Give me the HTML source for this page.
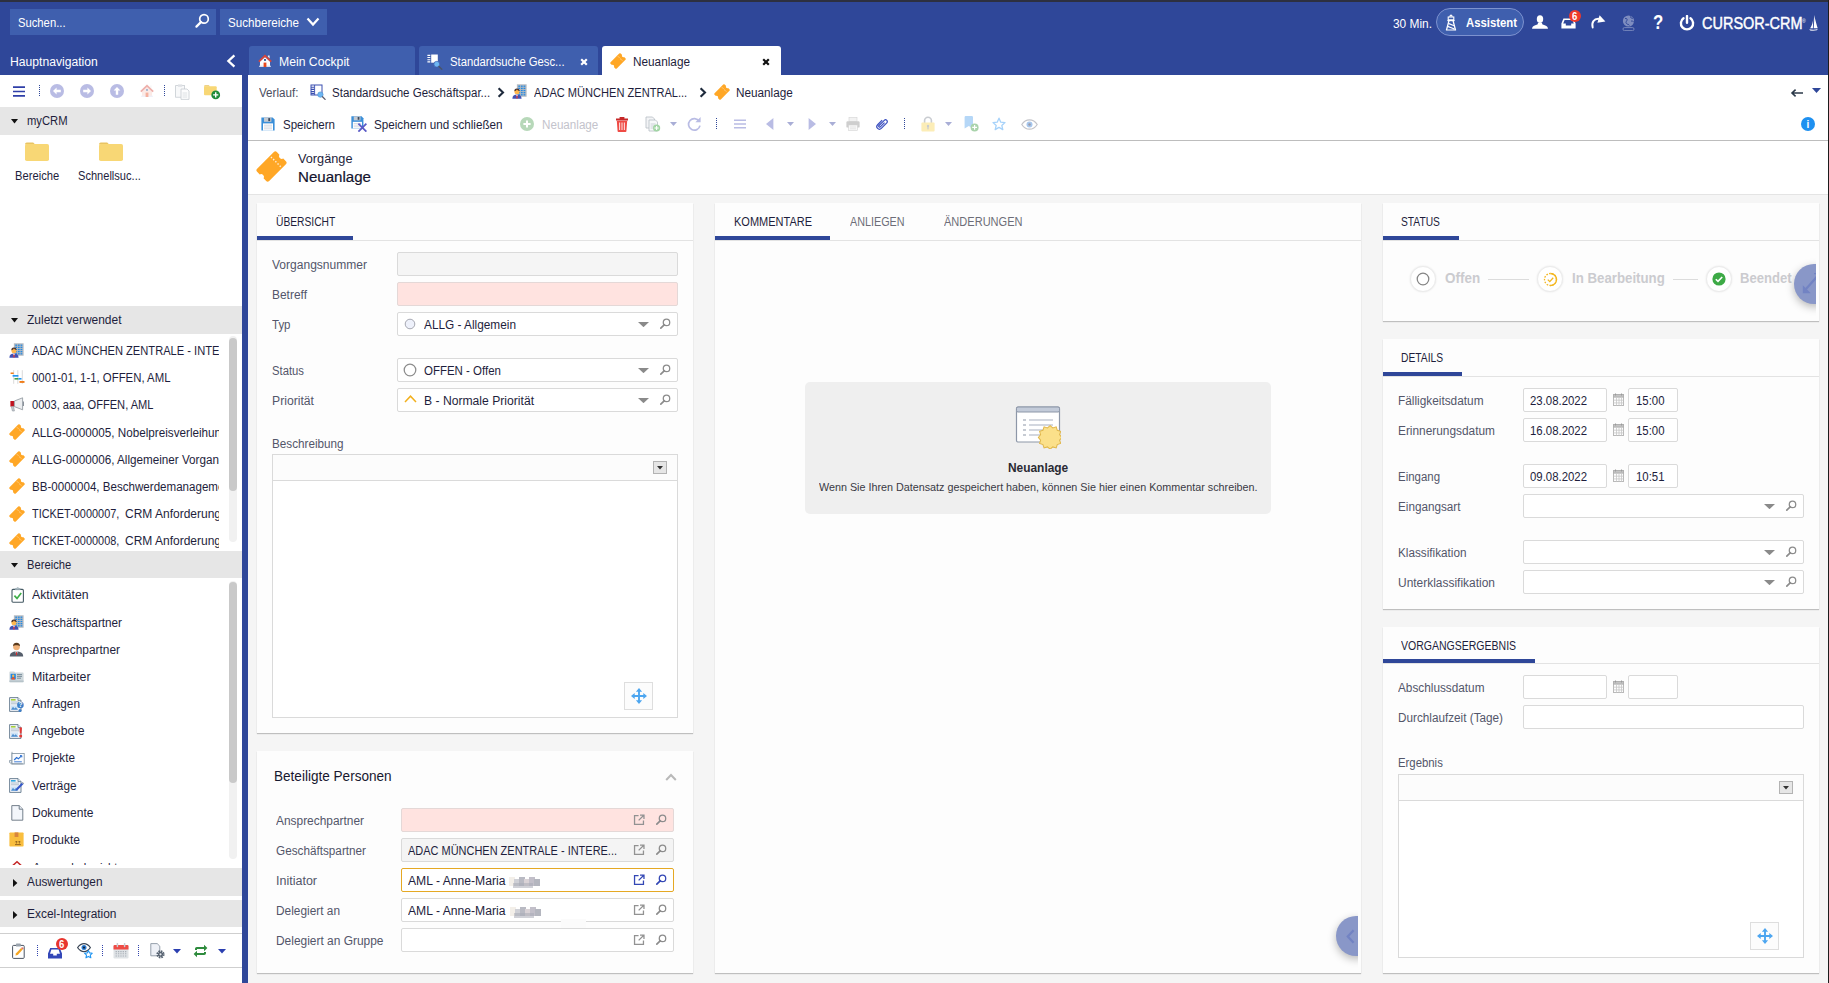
<!DOCTYPE html>
<html lang="de"><head><meta charset="utf-8"><title>CURSOR-CRM</title>
<style>
html,body{margin:0;padding:0;}
body{width:1829px;height:983px;overflow:hidden;position:relative;background:#f5f5f5;font-family:"Liberation Sans",sans-serif;color:#1e1e3c;}
.a{position:absolute;box-sizing:border-box;}
.t{position:absolute;white-space:nowrap;line-height:1;transform-origin:0 0;}
.f{background:#fff;border:1px solid #d6d6d6;border-radius:2px;}
.p{background:#fdfdfd;box-shadow:0 1px 1px rgba(0,0,0,.22);}
</style></head>
<body>
<div class="a " style="left:0px;top:0px;width:1829px;height:75px;background:#2f4799;"></div>
<div class="a " style="left:0px;top:0px;width:1829px;height:2px;background:#2d3040;"></div>
<div class="a " style="left:10px;top:9px;width:206px;height:26px;background:#3f5fae;"></div>
<span class="t" style="left:18.00px;top:17px;font-size:12.5px;transform:scaleX(0.8994);color:#fff;">Suchen...</span>
<svg class="a" style="left:194px;top:13px;" width="16" height="16" viewBox="0 0 16 16"><circle cx="10" cy="5.900" r="4.300" fill="none" stroke="#fff" stroke-width="1.7"/><path d="M6.900 9.100L2.400 13.600" stroke="#fff" stroke-width="2.2" stroke-linecap="round"/></svg>
<div class="a " style="left:220px;top:9px;width:107px;height:26px;background:#3f5fae;"></div>
<span class="t" style="left:227.50px;top:17px;font-size:12.5px;transform:scaleX(0.9288);color:#fff;">Suchbereiche</span>
<svg class="a" style="left:306px;top:17px;" width="14" height="10" viewBox="0 0 14 10"><path d="M1.5 1.5L7 7.5l5.5-6" fill="none" stroke="#fff" stroke-width="2.2"/></svg>
<span class="t" style="left:1392.60px;top:18px;font-size:12.5px;transform:scaleX(0.9514);color:#fff;">30 Min.</span>
<div class="a " style="left:1436px;top:8px;width:88px;height:28px;background:#3f5fae;border:1px solid #7d92cf;border-radius:14px;"></div>
<svg class="a" style="left:1445px;top:13.5px;" width="12" height="17" viewBox="0 0 12 17"><path d="M6 .300L3.700 2.600h4.600z" fill="#fff"/><rect x="3.200" y="3" width="5.600" height="2.800" fill="none" stroke="#fff" stroke-width="1.100"/><path d="M2.400 6.600h7.200" stroke="#fff" stroke-width="1.200"/><path d="M3.900 6.800L1.500 16M8.100 6.800L10.500 16" fill="none" stroke="#fff" stroke-width="1.300"/><path d="M3.300 9.400l5.900 2.400M2.600 12.400l6.900 2.600M.900 16h10.200" stroke="#fff" stroke-width="1.200"/></svg>
<span class="t" style="left:1465.50px;top:17px;font-size:12.5px;transform:scaleX(0.9046);color:#fff;font-weight:bold;">Assistent</span>
<svg class="a" style="left:1532px;top:15px;" width="16" height="14" viewBox="0 0 16 14"><ellipse cx="8" cy="4.100" rx="3.200" ry="3.900" fill="#fff"/><path d="M0 13.800c.200-2.600 2.400-3.300 5.300-4.200.500-.200.600-.900.600-1.600h4.200c0 .700.100 1.400.600 1.600 2.900.900 5.100 1.600 5.300 4.200z" fill="#fff"/></svg>
<svg class="a" style="left:1560.5px;top:18px;" width="15" height="11" viewBox="0 0 15 11"><path d="M.400 10.600V5.400L2.400.400h10.200l2 5v5.200zM2.200 5.600h2.600v2h5.400v-2h2.600l-1.400-3.600H3.600z" fill="#fff" fill-rule="evenodd"/></svg>
<div class="a " style="left:1569px;top:10px;width:12px;height:12px;background:#ee3a2c;border-radius:6px;"></div>
<span class="t" style="left:1572.30px;top:12px;font-size:10px;transform:scaleX(0.9500);color:#fff;font-weight:bold;">6</span>
<svg class="a" style="left:1590px;top:14px;" width="16" height="15" viewBox="0 0 16 15"><path d="M2.700 13.600C1.300 8.600 3.800 4.200 9.400 4.900" fill="none" stroke="#fff" stroke-width="1.900" stroke-linecap="round"/><path d="M9.600 1.200l5.800 6.400-8 1.200z" fill="#fff"/></svg>
<svg class="a" style="left:1622px;top:15px;" width="13" height="16" viewBox="0 0 13 16"><g opacity=".38"><circle cx="6.5" cy="6" r="5.6" fill="#fff"/><path d="M3 3.5c1.5-.5 2.5.5 2 1.8S3.4 7 4.4 8.4s2.4.6 3 2M8.6 1.4c-.6 1.4 1 2 2.4 1.8M9 6.2c1-.4 2.2 0 2.8.8" stroke="#2f4799" fill="none" stroke-width="1"/><rect x="1" y="12.6" width="11" height="3" rx="1.4" fill="none" stroke="#fff" stroke-width=".9"/></g></svg>
<span class="t" style="left:1653.30px;top:11px;font-size:21px;transform:scaleX(0.8000);color:#fff;font-weight:bold;">?</span>
<svg class="a" style="left:1679px;top:14.5px;" width="16" height="16" viewBox="0 0 16 16"><path d="M4.500 3.300a6.100 6.100 0 1 0 7 0" fill="none" stroke="#fff" stroke-width="2.400" stroke-linecap="round"/><path d="M8 1v6.800" stroke="#fff" stroke-width="2.400" stroke-linecap="round"/></svg>
<span class="t" style="left:1702.00px;top:15px;font-size:16.5px;transform:scaleX(0.8780);color:#fff;-webkit-text-stroke:.45px #fff;">CURSOR-CRM</span>
<span class="t" style="left:1802.00px;top:19px;font-size:5px;color:#fff;">®</span>
<svg class="a" style="left:1808.5px;top:15px;" width="9" height="16" viewBox="0 0 9 16"><path d="M5.200 0C6.300 5 7.500 9.600 8.700 13.200H4.700C5.100 9 5.300 4.600 5.200 0zM4.300 2.800C4.100 7 3.100 10.600 1.200 13.200h2.700z" fill="#fff"/><path d="M.2 14.300c2.800.500 5.800.500 8.600-.200l-.9 1.200c-2.200.500-4.800.500-6.800.100z" fill="#fff" opacity=".9"/></svg>
<span class="t" style="left:10.40px;top:56px;font-size:12.5px;transform:scaleX(0.9718);color:#fff;">Hauptnavigation</span>
<svg class="a" style="left:226px;top:54px;" width="10" height="14" viewBox="0 0 10 14"><path d="M8.4 1.4L2.4 7l6 5.6" fill="none" stroke="#fff" stroke-width="2.3"/></svg>
<div class="a " style="left:249px;top:46px;width:166px;height:29px;background:#3f5fae;border-radius:3px 3px 0 0;"></div>
<svg class="a" style="left:258px;top:54px;" width="14" height="14" viewBox="0 0 14 14"><g opacity="1"><path d="M2 7.600L7 3l5 4.600V13H2z" fill="#fbfbfd"/><path d="M1.200 11.700h11.600V13H1.200z" fill="#d9dcf1"/><path d="M9.900 1.400h1.700v3l-1.700-1.600z" fill="#eee"/><path d="M7 .500L.2 7l1.200 1.300L7 3l5.600 5.300L13.800 7z" fill="#d8453a"/><rect x="5.600" y="8.600" width="2.800" height="4.400" fill="#e8481c"/><rect x="6.100" y="5" width="1.800" height="1.900" fill="#1d4b8f"/></g></svg>
<span class="t" style="left:279.00px;top:56px;font-size:12.5px;transform:scaleX(0.9758);color:#fff;">Mein Cockpit</span>
<div class="a " style="left:419px;top:46px;width:179px;height:29px;background:#3f5fae;border-radius:3px 3px 0 0;"></div>
<svg class="a" style="left:427px;top:53.5px;" width="16" height="16" viewBox="0 0 16 16"><path d="M.4 1.300h2.900M.4 3.500h2.900M.4 5.700h2.900M.4 7.900h2.900" stroke="#fff" stroke-width="1.150"/><rect x="4.200" y=".500" width="6.600" height="8.200" fill="#fff"/><circle cx="9.800" cy="10.200" r="2.900" fill="#6db6f2" stroke="#3f5fae" stroke-width=".7"/><path d="M12 12.500l2.800 2.800" stroke="#4a5566" stroke-width="1.300" stroke-linecap="round"/></svg>
<span class="t" style="left:450.00px;top:56px;font-size:12.5px;transform:scaleX(0.9005);color:#fff;">Standardsuche Gesc...</span>
<svg class="a" style="left:580px;top:58px;" width="8" height="8" viewBox="0 0 8 8"><path d="M1.200 1.200l5.600 5.600M6.800 1.200L1.200 6.800" stroke="#fff" stroke-width="2.200"/></svg>
<div class="a " style="left:602px;top:46px;width:179px;height:29px;background:#fff;border-radius:3px 3px 0 0;"></div>
<svg class="a" style="left:610px;top:53px;" width="16" height="16" viewBox="0 0 16 16"><g transform="rotate(-45 8 8)"><path fill="#ffa726" d="M1.9 3.6h12.2a1.1 1.1 0 0 1 1.1 1.1v1.9a1.45 1.45 0 0 0 0 2.8v1.9a1.1 1.1 0 0 1-1.1 1.1H1.900a1.100 1.100 0 0 1-1.100-1.100V9.400a1.450 1.450 0 0 0 0-2.800V4.700a1.100 1.100 0 0 1 1.100-1.100z"/><path d="M11.300 4.300v7.400" stroke="#fff" stroke-opacity=".8" stroke-width=".75" stroke-dasharray=".75 .85"/></g></svg>
<span class="t" style="left:632.70px;top:56px;font-size:12.5px;transform:scaleX(0.9426);color:#1e1e3c;">Neuanlage</span>
<svg class="a" style="left:762px;top:58px;" width="8" height="8" viewBox="0 0 8 8"><path d="M1.200 1.200l5.600 5.600M6.800 1.200L1.200 6.800" stroke="#111" stroke-width="2.200"/></svg>
<div class="a " style="left:248px;top:75px;width:1581px;height:119px;background:#fff;"></div>
<div class="a " style="left:248px;top:140px;width:1581px;height:1px;background:#bdbdbd;"></div>
<div class="a " style="left:248px;top:194px;width:1581px;height:1px;background:#e4e4e4;"></div>
<span class="t" style="left:259.00px;top:87px;font-size:12.5px;transform:scaleX(0.9295);color:#4a4d5e;">Verlauf:</span>
<svg class="a" style="left:310px;top:84px;" width="16" height="16" viewBox="0 0 16 16"><rect x="1" y="1" width="11" height="10" fill="#fff" stroke="#3b4fb0" stroke-width="1"/><path d="M1 3.200h3.400M1 5.400h3.400M1 7.600h3.400M1 9.600h3.400" stroke="#3b4fb0" stroke-width="1.100"/><path d="M4.600 1v10" stroke="#3b4fb0" stroke-width=".9"/><circle cx="10.400" cy="10.600" r="2.700" fill="#6db6f2" stroke="#4a8fd0" stroke-width=".6"/><path d="M12.500 12.800l2.600 2.600" stroke="#5a5a6a" stroke-width="1.300" stroke-linecap="round"/></svg>
<span class="t" style="left:331.50px;top:87px;font-size:12.5px;transform:scaleX(0.9217);color:#1e1e3c;">Standardsuche Geschäftspar...</span>
<svg class="a" style="left:497px;top:86.5px;" width="8" height="11" viewBox="0 0 8 11"><path d="M1.6 1.2L6 5.5l-4.4 4.3" fill="none" stroke="#1e2a3c" stroke-width="2.1"/></svg>
<svg class="a" style="left:512px;top:84px;" width="15" height="15" viewBox="0 0 16 16"><rect x="5.200" y=".300" width="10.400" height="13.300" fill="#b4bac1"/><rect x="6.7" y="1.7" width="1.900" height="1.300" fill="#1e88e5"/><rect x="6.7" y="4.0" width="1.900" height="1.300" fill="#1e88e5"/><rect x="6.7" y="6.3" width="1.900" height="1.300" fill="#1e88e5"/><rect x="6.7" y="8.6" width="1.900" height="1.300" fill="#1e88e5"/><rect x="6.7" y="10.9" width="1.900" height="1.300" fill="#1e88e5"/><rect x="9.5" y="1.7" width="1.900" height="1.300" fill="#1e88e5"/><rect x="9.5" y="4.0" width="1.900" height="1.300" fill="#1e88e5"/><rect x="9.5" y="6.3" width="1.900" height="1.300" fill="#1e88e5"/><rect x="9.5" y="8.6" width="1.900" height="1.300" fill="#1e88e5"/><rect x="9.5" y="10.9" width="1.900" height="1.300" fill="#1e88e5"/><rect x="12.3" y="1.7" width="1.900" height="1.300" fill="#1e88e5"/><rect x="12.3" y="4.0" width="1.900" height="1.300" fill="#1e88e5"/><rect x="12.3" y="6.3" width="1.900" height="1.300" fill="#1e88e5"/><rect x="12.3" y="8.6" width="1.900" height="1.300" fill="#1e88e5"/><rect x="12.3" y="10.9" width="1.900" height="1.300" fill="#1e88e5"/><circle cx="5.300" cy="8.300" r="2.700" fill="#ffb74d"/><path d="M2.500 7.800a2.800 2.800 0 0 1 5.600-.400c-1.400-.200-2.200-.800-2.800-1.600-.600 1-1.600 1.700-2.800 2z" fill="#4e342e"/><path d="M.4 15.800c0-3.200 2-4.500 4.900-4.500s4.900 1.300 4.900 4.500z" fill="#3f51b5"/><path d="M3.900 11.400h2.800l-1.400 2z" fill="#fff"/><path d="M4.900 12h.8l.4 2.800-.8.800-.8-.8z" fill="#e53935"/></svg>
<span class="t" style="left:533.70px;top:87px;font-size:12.5px;transform:scaleX(0.8859);color:#1e1e3c;">ADAC MÜNCHEN ZENTRAL...</span>
<svg class="a" style="left:699px;top:86.5px;" width="8" height="11" viewBox="0 0 8 11"><path d="M1.6 1.2L6 5.5l-4.4 4.3" fill="none" stroke="#1e2a3c" stroke-width="2.1"/></svg>
<svg class="a" style="left:714px;top:84px;" width="16" height="16" viewBox="0 0 16 16"><g transform="rotate(-45 8 8)"><path fill="#ffa726" d="M1.9 3.6h12.2a1.1 1.1 0 0 1 1.1 1.1v1.9a1.45 1.45 0 0 0 0 2.8v1.9a1.1 1.1 0 0 1-1.1 1.1H1.900a1.100 1.100 0 0 1-1.100-1.100V9.400a1.450 1.450 0 0 0 0-2.800V4.700a1.100 1.100 0 0 1 1.100-1.100z"/><path d="M11.300 4.300v7.400" stroke="#fff" stroke-opacity=".8" stroke-width=".75" stroke-dasharray=".75 .85"/></g></svg>
<span class="t" style="left:735.70px;top:87px;font-size:12.5px;transform:scaleX(0.9393);color:#1e1e3c;">Neuanlage</span>
<svg class="a" style="left:1790px;top:88px;" width="14" height="10" viewBox="0 0 14 10"><path d="M13 5H2.4M5.6 1.6L2 5l3.6 3.4" fill="none" stroke="#2c3a4a" stroke-width="1.6"/></svg>
<svg class="a" style="left:1812px;top:88px;" width="9" height="5" viewBox="0 0 9 5"><path d="M0 0h9L4.5 5z" fill="#2f4799"/></svg>
<svg class="a" style="left:261px;top:117px;" width="14" height="14" viewBox="0 0 14 14"><path d="M.4 .400h11.200l2 2v11.200H.4z" fill="#3a8fd9"/><rect x="3" y=".400" width="7.400" height="4.400" fill="#c3c9d1"/><rect x="7.300" y="1.100" width="1.900" height="3" fill="#3d4a5c"/><rect x="2" y="6.400" width="10" height="7.200" fill="#fff"/><path d="M3 8.200h8M3 10h8M3 11.800h8" stroke="#c9d1db" stroke-width=".8"/></svg>
<span class="t" style="left:283.00px;top:119px;font-size:12.5px;transform:scaleX(0.9238);color:#1e1e3c;">Speichern</span>
<svg class="a" style="left:351px;top:116px;" width="16.2" height="16.2" viewBox="0 0 16.200 16.200"><g transform="scale(.914)"><path d="M.4 .400h11.200l2 2v11.200H.4z" fill="#3a8fd9"/><rect x="3" y=".400" width="7.400" height="4.400" fill="#c3c9d1"/><rect x="7.300" y="1.100" width="1.900" height="3" fill="#3d4a5c"/><rect x="2" y="6.400" width="10" height="7.200" fill="#fff"/><path d="M3 8.200h8M3 10h8M3 11.800h8" stroke="#c9d1db" stroke-width=".8"/></g><path d="M7.400 7.600l8 8M15.400 7.600l-8 8" stroke="#5a5ac6" stroke-width="1.800"/></svg>
<span class="t" style="left:374.00px;top:119px;font-size:12.5px;transform:scaleX(0.9340);color:#1e1e3c;">Speichern und schließen</span>
<svg class="a" style="left:520px;top:117px;" width="14" height="14" viewBox="0 0 14 14"><circle cx="7" cy="7" r="7" fill="#b7d8b9"/><path d="M7 3.4v7.2M3.4 7h7.2" stroke="#fff" stroke-width="2"/></svg>
<span class="t" style="left:542.00px;top:119px;font-size:12.5px;transform:scaleX(0.9311);color:#c3c3cc;">Neuanlage</span>
<svg class="a" style="left:615px;top:116px;" width="14" height="16" viewBox="0 0 14 16"><path d="M1 2.6h12v1.8H1zM4.6 1h4.8v1.6H4.6z" fill="#c62828"/><path d="M1.8 4.8h10.4l-.8 10.4a.9.9 0 0 1-.9.8H3.5a.9.9 0 0 1-.9-.8z" fill="#ef4b45"/><path d="M4.6 6.4v7.6M7 6.4v7.6M9.4 6.4v7.6" stroke="#fbdcda" stroke-width="1.1"/></svg>
<svg class="a" style="left:645px;top:116px;" width="16" height="16" viewBox="0 0 16 16"><g opacity=".7"><path d="M1 1h6.5l2 2v9H1z" fill="#eef0f3" stroke="#9aa3ad" stroke-width=".8"/><path d="M4 4h6.5l2 2v9H4z" fill="#f6f7f9" stroke="#9aa3ad" stroke-width=".8"/><path d="M5.6 8h5M5.6 10h5M5.6 12h3" stroke="#aab2bb" stroke-width=".8"/><circle cx="11.6" cy="12" r="3.6" fill="#7cc47f"/><path d="M11.6 9.9v4.2M9.5 12h4.2" stroke="#fff" stroke-width="1.1"/></g></svg>
<svg class="a" style="left:670px;top:122px;" width="7" height="4" viewBox="0 0 7 4"><path d="M0 0h7L3.5 4z" fill="#a9aed6"/></svg>
<svg class="a" style="left:687px;top:116px;" width="15" height="16" viewBox="0 0 15 16"><path d="M12.2 5.2A5.8 5.8 0 1 0 13 9.6" fill="none" stroke="#b9bce4" stroke-width="1.7"/><path d="M13.6 1v5.2H8.4z" fill="#b9bce4"/></svg>
<svg class="a" style="left:716px;top:118px;shape-rendering:crispEdges;" width="1" height="12" viewBox="0 0 1 12"><path d="M.5 0v12" stroke="#2f4799" stroke-width="1" stroke-dasharray="1 1"/></svg>
<svg class="a" style="left:734px;top:119px;" width="12" height="10" viewBox="0 0 12 10"><path d="M0 1.2h12M0 5h12M0 8.8h12" stroke="#b9bce4" stroke-width="1.6"/></svg>
<svg class="a" style="left:766px;top:118px;" width="8" height="12" viewBox="0 0 8 12"><path d="M7.4 0v12L0 6z" fill="#b9bce4"/></svg>
<svg class="a" style="left:786.5px;top:122px;" width="7" height="4" viewBox="0 0 7 4"><path d="M0 0h7L3.5 4z" fill="#a9aed6"/></svg>
<svg class="a" style="left:808px;top:118px;" width="8" height="12" viewBox="0 0 8 12"><path d="M.6 0v12L8 6z" fill="#b9bce4"/></svg>
<svg class="a" style="left:829px;top:122px;" width="7" height="4" viewBox="0 0 7 4"><path d="M0 0h7L3.5 4z" fill="#a9aed6"/></svg>
<svg class="a" style="left:846px;top:117px;" width="14" height="14" viewBox="0 0 14 14"><g opacity=".5"><rect x="3" y=".6" width="8" height="4" fill="#e6e6e6" stroke="#aaa" stroke-width=".6"/><rect x=".4" y="4.2" width="13.2" height="6.4" rx="1.2" fill="#9e9e9e"/><rect x="2.6" y="8" width="8.8" height="5.4" fill="#f2f2f2" stroke="#aaa" stroke-width=".6"/><path d="M4 10h6M4 11.8h6" stroke="#bbb" stroke-width=".7"/></g></svg>
<svg class="a" style="left:875px;top:117px;" width="14" height="14" viewBox="0 0 14 14"><g transform="rotate(45 7 7)"><path d="M4.4 4.2v6.4a2.6 2.6 0 0 0 5.2 0V2.8a1.8 1.8 0 0 0-3.6 0v7.4a.9.9 0 0 0 1.8 0V4.2" fill="none" stroke="#3b4fc0" stroke-width="1.25"/></g></svg>
<svg class="a" style="left:904px;top:118px;shape-rendering:crispEdges;" width="1" height="12" viewBox="0 0 1 12"><path d="M.5 0v12" stroke="#2f4799" stroke-width="1" stroke-dasharray="1 1"/></svg>
<svg class="a" style="left:921px;top:116px;" width="14" height="16" viewBox="0 0 14 16"><g opacity=".75"><path d="M3.6 7V4.6a3.4 3.4 0 0 1 6.8 0V7" fill="none" stroke="#b8bcc2" stroke-width="1.6"/><rect x=".4" y="6.4" width="13.2" height="9.2" rx="1" fill="#fbe8a0"/><circle cx="7" cy="10" r="1.2" fill="#b8bcc2"/><rect x="6.4" y="10" width="1.2" height="3.4" fill="#b8bcc2"/></g></svg>
<svg class="a" style="left:944.5px;top:122px;" width="7" height="4" viewBox="0 0 7 4"><path d="M0 0h7L3.5 4z" fill="#a9aed6"/></svg>
<svg class="a" style="left:963.5px;top:116px;" width="15" height="16" viewBox="0 0 15 16"><path d="M.6 1.2A1.2 1.2 0 0 1 1.8 0h6a1.2 1.2 0 0 1 1.2 1.2v11.4L4.8 10 .6 12.6z" fill="#b5d7f7"/><circle cx="10.6" cy="11.4" r="4" fill="#a9d3ab"/><path d="M10.6 9v4.8M8.2 11.4H13" stroke="#fff" stroke-width="1.2"/></svg>
<svg class="a" style="left:992px;top:117px;" width="14" height="14" viewBox="0 0 14 14"><path d="M7 1.2l1.8 4 4.2.4-3.2 2.8 1 4.2L7 10.4l-3.8 2.2 1-4.2L1 5.6l4.2-.4z" fill="#fff" stroke="#a6d2fa" stroke-width="1.3" stroke-linejoin="round"/></svg>
<svg class="a" style="left:1021px;top:118.5px;" width="17" height="11" viewBox="0 0 17 11"><path d="M.8 5.5C3 2 6 .8 8.5.8S14 2 16.2 5.5C14 9 11 10.2 8.5 10.2S3 9 .8 5.5z" fill="none" stroke="#c3c3c8" stroke-width="1.2"/><circle cx="8.5" cy="5.5" r="3" fill="#a7c7ee"/><circle cx="8.5" cy="5.5" r="1.2" fill="#9a9aa8"/></svg>
<div class="a " style="left:1801px;top:117px;width:14px;height:14px;background:#1e90f0;border-radius:7px;"></div>
<span class="t" style="left:1806.60px;top:120px;font-size:10px;color:#fff;font-weight:bold;">i</span>
<svg class="a" style="left:256px;top:150.5px;" width="31" height="31" viewBox="0 0 16 16"><g transform="rotate(-45 8 8)"><path fill="#ffa726" d="M1.9 3.6h12.2a1.1 1.1 0 0 1 1.1 1.1v1.9a1.45 1.45 0 0 0 0 2.8v1.9a1.1 1.1 0 0 1-1.1 1.1H1.900a1.100 1.100 0 0 1-1.100-1.100V9.400a1.450 1.450 0 0 0 0-2.800V4.700a1.100 1.100 0 0 1 1.100-1.100z"/><path d="M11.300 4.300v7.400" stroke="#fff" stroke-opacity=".8" stroke-width=".75" stroke-dasharray=".75 .85"/></g></svg>
<span class="t" style="left:297.80px;top:153px;font-size:12.8px;transform:scaleX(0.9944);color:#1e1e3c;">Vorgänge</span>
<span class="t" style="left:297.80px;top:169px;font-size:15.2px;transform:scaleX(0.9928);color:#14142e;-webkit-text-stroke:.2px #14142e;">Neuanlage</span>
<div class="a " style="left:0px;top:75px;width:242px;height:908px;background:#fff;"></div>
<div class="a " style="left:242px;top:75px;width:6px;height:908px;background:#2f4799;"></div>
<svg class="a" style="left:13px;top:85.5px;" width="12" height="11" viewBox="0 0 12 11"><path d="M0 1.2h12M0 5.5h12M0 9.8h12" stroke="#2f3fa8" stroke-width="1.7"/></svg>
<svg class="a" style="left:39px;top:85px;shape-rendering:crispEdges;" width="1" height="12" viewBox="0 0 1 12"><path d="M.5 0v12" stroke="#2f4799" stroke-width="1" stroke-dasharray="1 1"/></svg>
<svg class="a" style="left:50px;top:84px;" width="14" height="14" viewBox="0 0 14 14"><circle cx="7" cy="7" r="7" fill="#b9bce4"/><g transform="rotate(0 7 7)"><path d="M3 7l3.6-3.4v2.2h4.2v2.4H6.6v2.2z" fill="#fff"/></g></svg>
<svg class="a" style="left:80px;top:84px;" width="14" height="14" viewBox="0 0 14 14"><circle cx="7" cy="7" r="7" fill="#b9bce4"/><g transform="rotate(180 7 7)"><path d="M3 7l3.6-3.4v2.2h4.2v2.4H6.6v2.2z" fill="#fff"/></g></svg>
<svg class="a" style="left:110px;top:84px;" width="14" height="14" viewBox="0 0 14 14"><circle cx="7" cy="7" r="7" fill="#b9bce4"/><g transform="rotate(90 7 7)"><path d="M3 7l3.6-3.4v2.2h4.2v2.4H6.6v2.2z" fill="#fff"/></g></svg>
<svg class="a" style="left:140px;top:84px;" width="14" height="14" viewBox="0 0 14 14"><g opacity="0.42"><path d="M2 7.600L7 3l5 4.600V13H2z" fill="#f6cfc6"/><path d="M1.200 11.700h11.600V13H1.200z" fill="#d9dcf1"/><path d="M9.900 1.400h1.700v3l-1.700-1.600z" fill="#eee"/><path d="M7 .500L.2 7l1.200 1.300L7 3l5.600 5.300L13.800 7z" fill="#d8453a"/><rect x="5.600" y="8.600" width="2.800" height="4.400" fill="#e8481c"/><rect x="6.100" y="5" width="1.800" height="1.900" fill="#1d4b8f"/></g></svg>
<svg class="a" style="left:164px;top:85px;shape-rendering:crispEdges;" width="1" height="12" viewBox="0 0 1 12"><path d="M.5 0v12" stroke="#2f4799" stroke-width="1" stroke-dasharray="1 1"/></svg>
<svg class="a" style="left:175px;top:83.5px;" width="15" height="16" viewBox="0 0 15 16"><g opacity=".55"><rect x=".6" y="1.6" width="9" height="11.6" fill="#f4f5f7" stroke="#9aa3ad" stroke-width=".8"/><rect x="3" y=".4" width="4.2" height="2.4" fill="#c5cad1"/><path d="M6 5h6l2 2v8.4H6z" fill="#fafbfc" stroke="#9aa3ad" stroke-width=".8"/><path d="M7.6 9h4.6M7.6 11h4.6M7.6 13h4.6" stroke="#b5bcc4" stroke-width=".8"/></g></svg>
<svg class="a" style="left:204px;top:84.5px;" width="17" height="15" viewBox="0 0 17 15"><path d="M0 1.400A1.200 1.200 0 0 1 1.200.2h3.600l1.300 1.400H0z" fill="#e9c462"/><rect x="0" y="1.300" width="12.700" height="9" rx="1" fill="#f8d775"/><circle cx="11.700" cy="9.900" r="4.400" fill="#1f8b3b"/><path d="M11.700 7.300v5.200M9.100 9.900h5.200" stroke="#fff" stroke-width="1.400"/></svg>
<div class="a " style="left:0px;top:107px;width:242px;height:28px;background:#e6e6e6;"></div>
<svg class="a" style="left:11px;top:119px;" width="7" height="5" viewBox="0 0 7 5"><path d="M0 0h7L3.5 4.4z" fill="#111"/></svg>
<span class="t" style="left:27.00px;top:115px;font-size:12.5px;transform:scaleX(0.8996);color:#1e1e3c;">myCRM</span>
<svg class="a" style="left:25px;top:142px;" width="24" height="19" viewBox="0 0 24 19"><path d="M0 2.2A1.8 1.8 0 0 1 1.8.4h6.4l2 2.2H0z" fill="#e9c462"/><rect x="0" y="2" width="24" height="17" rx="1.8" fill="#f8d775"/></svg>
<svg class="a" style="left:99px;top:142px;" width="24" height="19" viewBox="0 0 24 19"><path d="M0 2.2A1.8 1.8 0 0 1 1.8.4h6.4l2 2.2H0z" fill="#e9c462"/><rect x="0" y="2" width="24" height="17" rx="1.8" fill="#f8d775"/></svg>
<span class="t" style="left:15.20px;top:170px;font-size:12.5px;transform:scaleX(0.8959);color:#1e1e3c;">Bereiche</span>
<span class="t" style="left:78.20px;top:170px;font-size:12.5px;transform:scaleX(0.8862);color:#1e1e3c;">Schnellsuc...</span>
<div class="a " style="left:0px;top:306px;width:242px;height:28px;background:#e6e6e6;"></div>
<svg class="a" style="left:11px;top:318px;" width="7" height="5" viewBox="0 0 7 5"><path d="M0 0h7L3.5 4.4z" fill="#111"/></svg>
<span class="t" style="left:27.00px;top:314px;font-size:12.5px;transform:scaleX(0.9579);color:#1e1e3c;">Zuletzt verwendet</span>
<svg class="a" style="left:9px;top:342.7px;" width="15" height="15" viewBox="0 0 16 16"><rect x="5.200" y=".300" width="10.400" height="13.300" fill="#b4bac1"/><rect x="6.7" y="1.7" width="1.900" height="1.300" fill="#1e88e5"/><rect x="6.7" y="4.0" width="1.900" height="1.300" fill="#1e88e5"/><rect x="6.7" y="6.3" width="1.900" height="1.300" fill="#1e88e5"/><rect x="6.7" y="8.6" width="1.900" height="1.300" fill="#1e88e5"/><rect x="6.7" y="10.9" width="1.900" height="1.300" fill="#1e88e5"/><rect x="9.5" y="1.7" width="1.900" height="1.300" fill="#1e88e5"/><rect x="9.5" y="4.0" width="1.900" height="1.300" fill="#1e88e5"/><rect x="9.5" y="6.3" width="1.900" height="1.300" fill="#1e88e5"/><rect x="9.5" y="8.6" width="1.900" height="1.300" fill="#1e88e5"/><rect x="9.5" y="10.9" width="1.900" height="1.300" fill="#1e88e5"/><rect x="12.3" y="1.7" width="1.900" height="1.300" fill="#1e88e5"/><rect x="12.3" y="4.0" width="1.900" height="1.300" fill="#1e88e5"/><rect x="12.3" y="6.3" width="1.900" height="1.300" fill="#1e88e5"/><rect x="12.3" y="8.6" width="1.900" height="1.300" fill="#1e88e5"/><rect x="12.3" y="10.9" width="1.900" height="1.300" fill="#1e88e5"/><circle cx="5.300" cy="8.300" r="2.700" fill="#ffb74d"/><path d="M2.500 7.800a2.800 2.800 0 0 1 5.600-.400c-1.400-.200-2.200-.800-2.800-1.600-.600 1-1.600 1.700-2.800 2z" fill="#4e342e"/><path d="M.4 15.800c0-3.200 2-4.500 4.900-4.500s4.900 1.300 4.900 4.500z" fill="#3f51b5"/><path d="M3.900 11.400h2.800l-1.400 2z" fill="#fff"/><path d="M4.900 12h.8l.4 2.800-.8.800-.8-.8z" fill="#e53935"/></svg>
<div class="a" style="left:32.3px;top:343px;width:186.7px;height:17.5px;overflow:hidden;"><span class="t" style="left:0;top:2px;font-size:12.5px;color:#1e1e3c;transform:scaleX(0.8910);">ADAC MÜNCHEN ZENTRALE - INTERESSENT</span></div>
<svg class="a" style="left:9.5px;top:370.1px;" width="15" height="14" viewBox="0 0 15 14"><path d="M3.700 .200v13.600M7.800 .200v13.600M12.300 .200v13.600" stroke="#cfcfcf" stroke-width=".8"/><rect x=".6" y="2.500" width="3.100" height="1.500" fill="#ef7d1a"/><rect x="2.600" y="5" width="5.800" height="1.700" fill="#2196f3"/><rect x="4.500" y="8" width="3.900" height="1.600" fill="#43a047"/><rect x="8.400" y="8" width="3.100" height="1.600" fill="#2196f3"/><rect x="9.500" y="11" width="5" height="1.900" fill="#ef7d1a"/></svg>
<div class="a" style="left:32.3px;top:370px;width:186.7px;height:17.5px;overflow:hidden;"><span class="t" style="left:0;top:2px;font-size:12.5px;color:#1e1e3c;transform:scaleX(0.9103);">0001-01, 1-1, OFFEN, AML</span></div>
<svg class="a" style="left:9.5px;top:397.3px;" width="15" height="15" viewBox="0 0 15 15"><rect x=".4" y="4" width="4" height="5.6" fill="#c1121f"/><path d="M4.4 4L12.6.8v12L4.4 9.6z" fill="#eceef0" stroke="#8c939b" stroke-width=".8"/><path d="M13.4 4.6v4.4" stroke="#8c939b" stroke-width="1.2"/><path d="M1.4 9.6h2.2l.8 4.4H2.4z" fill="#c9ced4" stroke="#8c939b" stroke-width=".6"/></svg>
<div class="a" style="left:32.3px;top:397px;width:186.7px;height:17.5px;overflow:hidden;"><span class="t" style="left:0;top:2px;font-size:12.5px;color:#1e1e3c;transform:scaleX(0.8877);">0003, aaa, OFFEN, AML</span></div>
<svg class="a" style="left:9px;top:423.9px;" width="16" height="16" viewBox="0 0 16 16"><g transform="rotate(-45 8 8)"><path fill="#ffa726" d="M1.9 3.6h12.2a1.1 1.1 0 0 1 1.1 1.1v1.9a1.45 1.45 0 0 0 0 2.8v1.9a1.1 1.1 0 0 1-1.1 1.1H1.900a1.100 1.100 0 0 1-1.100-1.100V9.400a1.450 1.450 0 0 0 0-2.800V4.700a1.100 1.100 0 0 1 1.100-1.100z"/><path d="M11.300 4.300v7.400" stroke="#fff" stroke-opacity=".8" stroke-width=".75" stroke-dasharray=".75 .85"/></g></svg>
<div class="a" style="left:32.3px;top:425px;width:186.7px;height:17.5px;overflow:hidden;"><span class="t" style="left:0;top:2px;font-size:12.5px;color:#1e1e3c;transform:scaleX(0.9352);">ALLG-0000005, Nobelpreisverleihung</span></div>
<svg class="a" style="left:9px;top:451.2px;" width="16" height="16" viewBox="0 0 16 16"><g transform="rotate(-45 8 8)"><path fill="#ffa726" d="M1.9 3.6h12.2a1.1 1.1 0 0 1 1.1 1.1v1.9a1.45 1.45 0 0 0 0 2.8v1.9a1.1 1.1 0 0 1-1.1 1.1H1.900a1.100 1.100 0 0 1-1.100-1.100V9.400a1.450 1.450 0 0 0 0-2.800V4.700a1.100 1.100 0 0 1 1.100-1.100z"/><path d="M11.300 4.300v7.400" stroke="#fff" stroke-opacity=".8" stroke-width=".75" stroke-dasharray=".75 .85"/></g></svg>
<div class="a" style="left:32.3px;top:452px;width:186.7px;height:17.5px;overflow:hidden;"><span class="t" style="left:0;top:2px;font-size:12.5px;color:#1e1e3c;transform:scaleX(0.9343);">ALLG-0000006, Allgemeiner Vorgang</span></div>
<svg class="a" style="left:9px;top:478.4px;" width="16" height="16" viewBox="0 0 16 16"><g transform="rotate(-45 8 8)"><path fill="#ffa726" d="M1.9 3.6h12.2a1.1 1.1 0 0 1 1.1 1.1v1.9a1.45 1.45 0 0 0 0 2.8v1.9a1.1 1.1 0 0 1-1.1 1.1H1.900a1.100 1.100 0 0 1-1.100-1.100V9.400a1.450 1.450 0 0 0 0-2.800V4.700a1.100 1.100 0 0 1 1.100-1.100z"/><path d="M11.300 4.300v7.400" stroke="#fff" stroke-opacity=".8" stroke-width=".75" stroke-dasharray=".75 .85"/></g></svg>
<div class="a" style="left:32.3px;top:479px;width:186.7px;height:17.5px;overflow:hidden;"><span class="t" style="left:0;top:2px;font-size:12.5px;color:#1e1e3c;transform:scaleX(0.9262);">BB-0000004, Beschwerdemanagement</span></div>
<svg class="a" style="left:9px;top:505.6px;" width="16" height="16" viewBox="0 0 16 16"><g transform="rotate(-45 8 8)"><path fill="#ffa726" d="M1.9 3.6h12.2a1.1 1.1 0 0 1 1.1 1.1v1.9a1.45 1.45 0 0 0 0 2.8v1.9a1.1 1.1 0 0 1-1.1 1.1H1.900a1.100 1.100 0 0 1-1.100-1.100V9.400a1.450 1.450 0 0 0 0-2.800V4.700a1.100 1.100 0 0 1 1.100-1.100z"/><path d="M11.300 4.300v7.400" stroke="#fff" stroke-opacity=".8" stroke-width=".75" stroke-dasharray=".75 .85"/></g></svg>
<div class="a" style="left:32.3px;top:506px;width:90px;height:17.5px;overflow:hidden;"><span class="t" style="left:0;top:2px;font-size:12.5px;color:#1e1e3c;transform:scaleX(0.8725);">TICKET-0000007,</span></div>
<div class="a" style="left:124.5px;top:506px;width:94.7px;height:17.5px;overflow:hidden;"><span class="t" style="left:0;top:2px;font-size:12.5px;color:#1e1e3c;transform:scaleX(0.9595);">CRM Anforderungen</span></div>
<svg class="a" style="left:9px;top:532.6px;" width="16" height="16" viewBox="0 0 16 16"><g transform="rotate(-45 8 8)"><path fill="#ffa726" d="M1.9 3.6h12.2a1.1 1.1 0 0 1 1.1 1.1v1.9a1.45 1.45 0 0 0 0 2.8v1.9a1.1 1.1 0 0 1-1.1 1.1H1.900a1.100 1.100 0 0 1-1.100-1.100V9.400a1.450 1.450 0 0 0 0-2.800V4.700a1.100 1.100 0 0 1 1.100-1.100z"/><path d="M11.300 4.300v7.400" stroke="#fff" stroke-opacity=".8" stroke-width=".75" stroke-dasharray=".75 .85"/></g></svg>
<div class="a" style="left:32.3px;top:533px;width:90px;height:17.5px;overflow:hidden;"><span class="t" style="left:0;top:2px;font-size:12.5px;color:#1e1e3c;transform:scaleX(0.8725);">TICKET-0000008,</span></div>
<div class="a" style="left:124.5px;top:533px;width:94.7px;height:17.5px;overflow:hidden;"><span class="t" style="left:0;top:2px;font-size:12.5px;color:#1e1e3c;transform:scaleX(0.9595);">CRM Anforderungen</span></div>
<div class="a " style="left:229px;top:336px;width:8px;height:206px;background:#f1f1f1;border-radius:4px;"></div>
<div class="a " style="left:229px;top:338px;width:8px;height:153px;background:#c9c9c9;border-radius:4px;"></div>
<div class="a " style="left:0px;top:551px;width:242px;height:27px;background:#e6e6e6;"></div>
<svg class="a" style="left:11px;top:563px;" width="7" height="5" viewBox="0 0 7 5"><path d="M0 0h7L3.5 4.4z" fill="#111"/></svg>
<span class="t" style="left:27.00px;top:559px;font-size:12.5px;transform:scaleX(0.8959);color:#1e1e3c;">Bereiche</span>
<div class="a " style="left:229px;top:581px;width:8px;height:278px;background:#f1f1f1;border-radius:4px;"></div>
<div class="a " style="left:229px;top:582px;width:8px;height:201px;background:#c9c9c9;border-radius:4px;"></div>
<svg class="a" style="left:10.5px;top:586.2px;" width="14" height="17" viewBox="0 0 14 17"><rect x="1" y="3.400" width="11.400" height="12.800" rx="1" fill="#fff" stroke="#455a64" stroke-width="1.100"/><path d="M4.200 3.800V2.600h1.400a1.100 1.100 0 0 1 2.200 0h1.400v1.200z" fill="#b0bec5" stroke="#90a4ae" stroke-width=".5"/><path d="M3.400 9.600l2.600 2.800 4.200-5.400" fill="none" stroke="#3fae49" stroke-width="1.700"/></svg>
<span class="t" style="left:32.30px;top:589px;font-size:12.5px;transform:scaleX(0.9798);color:#1e1e3c;">Aktivitäten</span>
<svg class="a" style="left:9px;top:614.6px;" width="15" height="15" viewBox="0 0 16 16"><rect x="5.200" y=".300" width="10.400" height="13.300" fill="#b4bac1"/><rect x="6.7" y="1.7" width="1.900" height="1.300" fill="#1e88e5"/><rect x="6.7" y="4.0" width="1.900" height="1.300" fill="#1e88e5"/><rect x="6.7" y="6.3" width="1.900" height="1.300" fill="#1e88e5"/><rect x="6.7" y="8.6" width="1.900" height="1.300" fill="#1e88e5"/><rect x="6.7" y="10.9" width="1.900" height="1.300" fill="#1e88e5"/><rect x="9.5" y="1.7" width="1.900" height="1.300" fill="#1e88e5"/><rect x="9.5" y="4.0" width="1.900" height="1.300" fill="#1e88e5"/><rect x="9.5" y="6.3" width="1.900" height="1.300" fill="#1e88e5"/><rect x="9.5" y="8.6" width="1.900" height="1.300" fill="#1e88e5"/><rect x="9.5" y="10.9" width="1.900" height="1.300" fill="#1e88e5"/><rect x="12.3" y="1.7" width="1.900" height="1.300" fill="#1e88e5"/><rect x="12.3" y="4.0" width="1.900" height="1.300" fill="#1e88e5"/><rect x="12.3" y="6.3" width="1.900" height="1.300" fill="#1e88e5"/><rect x="12.3" y="8.6" width="1.900" height="1.300" fill="#1e88e5"/><rect x="12.3" y="10.9" width="1.900" height="1.300" fill="#1e88e5"/><circle cx="5.300" cy="8.300" r="2.700" fill="#ffb74d"/><path d="M2.500 7.800a2.800 2.800 0 0 1 5.600-.400c-1.400-.200-2.200-.800-2.800-1.600-.600 1-1.600 1.700-2.800 2z" fill="#4e342e"/><path d="M.4 15.800c0-3.200 2-4.500 4.900-4.500s4.900 1.300 4.900 4.500z" fill="#3f51b5"/><path d="M3.900 11.400h2.800l-1.400 2z" fill="#fff"/><path d="M4.900 12h.8l.4 2.800-.8.800-.8-.8z" fill="#e53935"/></svg>
<span class="t" style="left:32.30px;top:617px;font-size:12.5px;transform:scaleX(0.9387);color:#1e1e3c;">Geschäftspartner</span>
<svg class="a" style="left:9px;top:641.8px;" width="15" height="15" viewBox="0 0 15 15"><circle cx="7.5" cy="4.8" r="3.4" fill="#f0b27a"/><path d="M4 4.2a3.5 3.5 0 0 1 7 0c-1.4-1.2-5.6-1.2-7 0z" fill="#5a3b1c"/><path d="M.8 14.6c0-3.6 2.6-5 6.7-5s6.700 1.4 6.700 5z" fill="#555e6b"/><path d="M6.300 9.600h2.400L7.500 13.400z" fill="#fff"/><path d="M7.100 10h.8l.3 2.600-.7.800-.7-.8z" fill="#d32f2f"/></svg>
<span class="t" style="left:32.30px;top:644px;font-size:12.5px;transform:scaleX(0.9522);color:#1e1e3c;">Ansprechpartner</span>
<svg class="a" style="left:9px;top:670.9px;" width="15" height="12" viewBox="0 0 15 12"><path d="M.4 1.200A.8.800 0 0 1 1.200.4h4l1 1.200h7.600a.8.800 0 0 1 .8.800v8.400a.8.800 0 0 1-.8.800H1.200a.8.800 0 0 1-.8-.8z" fill="#cfd8dc"/><rect x="1.600" y="2.800" width="5.200" height="5.600" fill="#1e88e5"/><circle cx="4.200" cy="4.800" r="1.200" fill="#ffb74d"/><path d="M2.400 8.400c0-1.600.8-2.200 1.800-2.200s1.800.6 1.800 2.200z" fill="#f4511e"/><path d="M8 3.600h5M8 5.400h5M8 7.200h4" stroke="#6f8594" stroke-width=".9"/><rect x=".4" y="9.600" width="14.200" height="1.200" fill="#b0bec5"/></svg>
<span class="t" style="left:32.30px;top:671px;font-size:12.5px;transform:scaleX(0.9908);color:#1e1e3c;">Mitarbeiter</span>
<svg class="a" style="left:9px;top:696.6px;" width="16" height="15" viewBox="0 0 16 15"><path d="M.6.600h8.400l3 3v10.800H.6z" fill="#f4f7fb" stroke="#62788c" stroke-width=".9"/><path d="M9 .600v3h3" fill="#dfe7ef" stroke="#62788c" stroke-width=".8"/><rect x="2" y="2" width="4.600" height="1.600" fill="#a6cf3a"/><path d="M2 5h8M2 6.800h8" stroke="#9fb0c0" stroke-width=".8"/><rect x="2" y="8.400" width="7" height="4.400" fill="#cfe3f6"/><path d="M2 12.800l2-3 1.400 1.800 1.400-1.400 2.200 2.600z" fill="#4f8fd0"/><circle cx="11.400" cy="8" r="3.300" fill="#3d7fc9"/><text x="9.500" y="10.300" font-family="Liberation Sans" font-weight="bold" font-size="6.500" fill="#fff">?</text><circle cx="11" cy="13.400" r="1.500" fill="#3d7fc9"/></svg>
<span class="t" style="left:32.30px;top:698px;font-size:12.5px;transform:scaleX(0.9461);color:#1e1e3c;">Anfragen</span>
<svg class="a" style="left:9px;top:723.5px;" width="16" height="15" viewBox="0 0 16 15"><path d="M.6.600h8.400l3 3v10.800H.6z" fill="#f4f7fb" stroke="#62788c" stroke-width=".9"/><path d="M9 .600v3h3" fill="#dfe7ef" stroke="#62788c" stroke-width=".8"/><rect x="2" y="2" width="4.600" height="1.600" fill="#a6cf3a"/><path d="M2 5h8M2 6.800h8" stroke="#9fb0c0" stroke-width=".8"/><rect x="2" y="8.400" width="7" height="4.400" fill="#cfe3f6"/><path d="M2 12.800l2-3 1.400 1.800 1.400-1.400 2.200 2.600z" fill="#4f8fd0"/><path d="M10.400 3.400h2.600l-.5 6.200h-1.600z" fill="#e53935"/><circle cx="11.700" cy="12" r="1.500" fill="#e53935"/></svg>
<span class="t" style="left:32.30px;top:725px;font-size:12.5px;transform:scaleX(0.9809);color:#1e1e3c;">Angebote</span>
<svg class="a" style="left:8.5px;top:751px;" width="16" height="14" viewBox="0 0 16 14"><path d="M3 .800v10.400a1.400 1.400 0 0 1-2.600 0V9.600h2.200" fill="#eef2f6" stroke="#7d8f9e" stroke-width=".8"/><rect x="3" y="2.400" width="12.200" height="10.600" fill="#fbfcfe" stroke="#7d8f9e" stroke-width=".8"/><path d="M1.800 12.800h12" stroke="#7d8f9e" stroke-width=".8"/><path d="M5.200 9l2.400-2.400 1.800 1.200 3-3" fill="none" stroke="#2b6fd1" stroke-width="1.200"/><path d="M11 4.600h1.800v1.800" fill="none" stroke="#2b6fd1" stroke-width="1"/><path d="M5.200 10.800h7.600" stroke="#2b6fd1" stroke-width=".9"/></svg>
<span class="t" style="left:32.30px;top:752px;font-size:12.5px;transform:scaleX(0.9377);color:#1e1e3c;">Projekte</span>
<svg class="a" style="left:9px;top:778.1px;" width="16" height="15" viewBox="0 0 16 15"><path d="M.6.600h8.400l3 3v10.800H.6z" fill="#f4f7fb" stroke="#62788c" stroke-width=".9"/><path d="M9 .600v3h3" fill="#dfe7ef" stroke="#62788c" stroke-width=".8"/><rect x="2" y="2" width="4.600" height="1.600" fill="#2ea7e0"/><path d="M2 5h8M2 6.800h8" stroke="#9fb0c0" stroke-width=".8"/><rect x="2" y="8.400" width="7" height="4.400" fill="#cfe3f6"/><path d="M2 12.800l2-3 1.400 1.800 1.400-1.400 2.200 2.600z" fill="#4f8fd0"/><path d="M6.600 12.800l.6-2.200 5.600-5.800 1.500 1.500-5.600 5.800z" fill="#3558c9"/><path d="M12.800 4.800l.8-.8 1.500 1.500-.8.800z" fill="#8e99a6"/></svg>
<span class="t" style="left:32.30px;top:780px;font-size:12.5px;transform:scaleX(0.9417);color:#1e1e3c;">Verträge</span>
<svg class="a" style="left:10.5px;top:804.8px;" width="13" height="16" viewBox="0 0 13 16"><path d="M.8.600h7.400l3.600 3.600v11H.8z" fill="#f3f6fb" stroke="#66737f" stroke-width=".9"/><path d="M8.200.600v3.600h3.600" fill="#e3e9f1" stroke="#66737f" stroke-width=".9"/></svg>
<span class="t" style="left:32.30px;top:807px;font-size:12.5px;transform:scaleX(0.9621);color:#1e1e3c;">Dokumente</span>
<svg class="a" style="left:9px;top:832.4px;" width="15" height="15" viewBox="0 0 15 15"><rect x=".4" y=".4" width="14.200" height="14.200" rx=".8" fill="#f9be3e"/><rect x="5.600" y=".4" width="3.800" height="4.600" fill="#d8853c"/><path d="M6 12.600h5.800" stroke="#8a5a1a" stroke-width=".9"/><path d="M7.400 11.600V9.200M6.400 10.200l1-1.200 1 1.200M10.400 11.600V9.200M9.400 10.200l1-1.200 1 1.200" fill="none" stroke="#8a5a1a" stroke-width=".8"/></svg>
<span class="t" style="left:32.30px;top:834px;font-size:12.5px;transform:scaleX(0.9594);color:#1e1e3c;">Produkte</span>
<div class="a" style="left:0;top:858px;width:228px;height:7px;overflow:hidden;"><svg class="a" style="left:11px;top:1.500px" width="12" height="8"><path d="M.8 6.400l5.200-4.600 5.200 4.600" fill="none" stroke="#c62828" stroke-width="1.500"/></svg><span class="t" style="left:32.500px;top:4px;font-size:12.5px;color:#1e1e3c;transform:scaleX(.9);">Anwenderberichte</span></div>
<div class="a " style="left:0px;top:868px;width:242px;height:28px;background:#e6e6e6;"></div>
<svg class="a" style="left:13px;top:878.5px;" width="5" height="8" viewBox="0 0 5 8"><path d="M0 0v8l4.4-4z" fill="#111"/></svg>
<span class="t" style="left:27.00px;top:876px;font-size:12.5px;transform:scaleX(0.9448);color:#1e1e3c;">Auswertungen</span>
<div class="a " style="left:0px;top:900px;width:242px;height:27px;background:#e6e6e6;"></div>
<svg class="a" style="left:13px;top:910.5px;" width="5" height="8" viewBox="0 0 5 8"><path d="M0 0v8l4.4-4z" fill="#111"/></svg>
<span class="t" style="left:27.00px;top:908px;font-size:12.5px;transform:scaleX(0.9542);color:#1e1e3c;">Excel-Integration</span>
<div class="a " style="left:0px;top:933px;width:242px;height:1px;background:#cfcfcf;"></div>
<div class="a " style="left:0px;top:967px;width:242px;height:1px;background:#cfcfcf;"></div>
<svg class="a" style="left:12px;top:943px;" width="13" height="16" viewBox="0 0 13 16"><rect x=".6" y="2.400" width="11.600" height="13" rx="1" fill="#fff" stroke="#4b5563" stroke-width="1"/><rect x="4" y=".6" width="4.800" height="3" rx=".6" fill="#9aa3ad"/><path d="M3.400 12.600l.7-2.300 5-5.300 1.600 1.600-5 5.300z" fill="#f5a623"/><path d="M9.100 5l1 -1 1.600 1.600-1 1z" fill="#e57368"/></svg>
<svg class="a" style="left:37px;top:945px;shape-rendering:crispEdges;" width="1" height="12" viewBox="0 0 1 12"><path d="M.5 0v12" stroke="#3344ad" stroke-width="1" stroke-dasharray="1 1"/></svg>
<svg class="a" style="left:47px;top:946.5px;" width="16" height="12" viewBox="0 0 16 12"><path d="M1 11.400V6.600L3.200 1h9.600L15 6.600v4.800zM3 6.800h3.200v1.700h3.600V6.800H13l-1.400-4.300H4.400z" fill="#3347b8" fill-rule="evenodd"/></svg>
<div class="a " style="left:56px;top:938px;width:12px;height:12px;background:#e8352e;border-radius:6px;"></div>
<span class="t" style="left:59.30px;top:940px;font-size:10px;transform:scaleX(0.9500);color:#fff;font-weight:bold;">6</span>
<svg class="a" style="left:77px;top:943px;" width="17" height="17" viewBox="0 0 17 17"><path d="M.6 4.600C2.600 1.800 4.800.6 7 .6s4.400 1.200 6.400 4C11.400 7.400 9.200 8.600 7 8.600S2.600 7.400.6 4.600z" fill="#fff" stroke="#3a4656" stroke-width="1.050"/><circle cx="7" cy="4.600" r="2.500" fill="#2b7bd1"/><circle cx="7" cy="4.600" r="1.100" fill="#10243f"/><path d="M11.400 7.400l1.200 2.500 2.700.3-2 1.900.55 2.700-2.450-1.400-2.450 1.400.55-2.700-2-1.900 2.700-.3z" fill="#fff" stroke="#2196f3" stroke-width="1.100" stroke-linejoin="round"/></svg>
<svg class="a" style="left:102px;top:945px;shape-rendering:crispEdges;" width="1" height="12" viewBox="0 0 1 12"><path d="M.5 0v12" stroke="#3344ad" stroke-width="1" stroke-dasharray="1 1"/></svg>
<svg class="a" style="left:113px;top:943px;" width="16" height="16" viewBox="0 0 16 16"><rect x=".5" y="2" width="15" height="13.500" rx="1.200" fill="#dfe3e6"/><path d="M.5 6.400V3.200A1.200 1.200 0 0 1 1.700 2h12.600a1.200 1.200 0 0 1 1.200 1.200v3.200z" fill="#ef4b45"/><path d="M4.400 .6v3M11.600 .6v3" stroke="#c9cdd2" stroke-width="1.500" stroke-linecap="round"/><path d="M2.600 8.600h11M2.600 10.800h11M2.600 13h11" stroke="#a9b0b8" stroke-width="1.100" stroke-dasharray="1.300 1.050"/></svg>
<svg class="a" style="left:138px;top:945px;shape-rendering:crispEdges;" width="1" height="12" viewBox="0 0 1 12"><path d="M.5 0v12" stroke="#3344ad" stroke-width="1" stroke-dasharray="1 1"/></svg>
<svg class="a" style="left:150px;top:943px;" width="16" height="16" viewBox="0 0 16 16"><path d="M.8.600h6.400l2.600 2.600v9.600H.8z" fill="#eef1f7" stroke="#8b96a3" stroke-width=".9"/><g transform="translate(10.500,11.300)"><circle r="3" fill="none" stroke="#566270" stroke-width="2.200" stroke-dasharray="1.500 .85"/><circle r="2.500" fill="#566270"/><circle r="1.100" fill="#e6e9ee"/></g></svg>
<svg class="a" style="left:173px;top:949px;" width="8" height="4.5" viewBox="0 0 8 4.5"><path d="M0 0h8L4.0 4.5z" fill="#2b3fb0"/></svg>
<svg class="a" style="left:193px;top:944px;" width="15" height="14" viewBox="0 0 15 14"><path d="M2 6V4.800A1.800 1.800 0 0 1 3.800 3H11V.8L14.400 4 11 7.200V5H4v1zM13 8v1.200a1.800 1.800 0 0 1-1.800 1.800H4v2.200L.6 10 4 6.800V9h7V8z" fill="#2e8b3d"/></svg>
<svg class="a" style="left:218px;top:949px;" width="8" height="4.5" viewBox="0 0 8 4.5"><path d="M0 0h8L4.0 4.5z" fill="#2b3fb0"/></svg>
<div class="a p" style="left:257px;top:203px;width:436px;height:530px;"></div>
<div class="a " style="left:257px;top:240px;width:436px;height:1px;background:#e3e3e3;"></div>
<div class="a " style="left:257px;top:236px;width:96px;height:4px;background:#2f4799;"></div>
<span class="t" style="left:275.70px;top:216px;font-size:12px;transform:scaleX(0.8552);color:#1e1e3c;">ÜBERSICHT</span>
<span class="t" style="left:271.90px;top:259px;font-size:12.5px;transform:scaleX(0.9629);color:#53566a;">Vorgangsnummer</span>
<div class="a " style="left:397px;top:252px;width:281px;height:24px;background:#f5f5f5;border:1px solid #dadada;border-radius:2px;"></div>
<span class="t" style="left:271.90px;top:289px;font-size:12.5px;transform:scaleX(0.9564);color:#53566a;">Betreff</span>
<div class="a " style="left:397px;top:282px;width:281px;height:24px;background:#ffe3e0;border:1px solid #e4d8d7;border-radius:2px;"></div>
<span class="t" style="left:271.90px;top:319px;font-size:12.5px;transform:scaleX(0.9182);color:#53566a;">Typ</span>
<div class="a " style="left:397px;top:312px;width:281px;height:24px;background:#fff;border:1px solid #dadada;border-radius:2px;"></div>
<svg class="a" style="left:637.5px;top:321.7px;" width="11" height="5.2" viewBox="0 0 11 5.2"><path d="M0 0h11L5.5 5.2z" fill="#8a8a8a"/></svg>
<svg class="a" style="left:659px;top:318px;" width="12" height="12" viewBox="0 0 16 16"><circle cx="10" cy="5.900" r="4.300" fill="none" stroke="#8c8c8c" stroke-width="1.7"/><path d="M6.900 9.100L2.400 13.600" stroke="#8c8c8c" stroke-width="2.2" stroke-linecap="round"/></svg>
<svg class="a" style="left:404px;top:318px;" width="12" height="12" viewBox="0 0 12 12"><circle cx="6" cy="6" r="4.800" fill="#eef1fb" stroke="#a6a8b2" stroke-width="1"/></svg>
<span class="t" style="left:424.00px;top:319px;font-size:12.5px;transform:scaleX(0.9458);color:#1e1e3c;">ALLG - Allgemein</span>
<span class="t" style="left:271.90px;top:365px;font-size:12.5px;transform:scaleX(0.9030);color:#53566a;">Status</span>
<div class="a " style="left:397px;top:358px;width:281px;height:24px;background:#fff;border:1px solid #dadada;border-radius:2px;"></div>
<svg class="a" style="left:637.5px;top:367.7px;" width="11" height="5.2" viewBox="0 0 11 5.2"><path d="M0 0h11L5.5 5.2z" fill="#8a8a8a"/></svg>
<svg class="a" style="left:659px;top:364px;" width="12" height="12" viewBox="0 0 16 16"><circle cx="10" cy="5.900" r="4.300" fill="none" stroke="#8c8c8c" stroke-width="1.7"/><path d="M6.900 9.100L2.400 13.600" stroke="#8c8c8c" stroke-width="2.2" stroke-linecap="round"/></svg>
<svg class="a" style="left:403px;top:363px;" width="14" height="14" viewBox="0 0 14 14"><circle cx="7" cy="7" r="5.800" fill="#fff" stroke="#8c8c8c" stroke-width="1.250"/></svg>
<span class="t" style="left:424.00px;top:365px;font-size:12.5px;transform:scaleX(0.9187);color:#1e1e3c;">OFFEN - Offen</span>
<span class="t" style="left:271.90px;top:395px;font-size:12.5px;transform:scaleX(0.9752);color:#53566a;">Priorität</span>
<div class="a " style="left:397px;top:388px;width:281px;height:24px;background:#fff;border:1px solid #dadada;border-radius:2px;"></div>
<svg class="a" style="left:637.5px;top:397.7px;" width="11" height="5.2" viewBox="0 0 11 5.2"><path d="M0 0h11L5.5 5.2z" fill="#8a8a8a"/></svg>
<svg class="a" style="left:659px;top:394px;" width="12" height="12" viewBox="0 0 16 16"><circle cx="10" cy="5.900" r="4.300" fill="none" stroke="#8c8c8c" stroke-width="1.7"/><path d="M6.900 9.100L2.400 13.600" stroke="#8c8c8c" stroke-width="2.2" stroke-linecap="round"/></svg>
<svg class="a" style="left:404px;top:395px;" width="13" height="8" viewBox="0 0 13 8"><path d="M1 7L6.500 1.200 12 7" fill="none" stroke="#f2b01e" stroke-width="1.500"/></svg>
<span class="t" style="left:424.00px;top:395px;font-size:12.5px;transform:scaleX(0.9716);color:#1e1e3c;">B - Normale Priorität</span>
<span class="t" style="left:271.90px;top:438px;font-size:12.5px;transform:scaleX(0.9354);color:#53566a;">Beschreibung</span>
<div class="a " style="left:272px;top:454px;width:406px;height:264px;background:#fff;border:1px solid #dadada;"></div>
<div class="a " style="left:272px;top:454px;width:406px;height:27px;background:#fcfcfc;border:1px solid #dadada;"></div>
<div class="a " style="left:653px;top:461px;width:14px;height:13px;background:#e6e6e6;border:1px solid #b3b3b3;"></div>
<svg class="a" style="left:657px;top:466px;" width="6" height="3.5" viewBox="0 0 6 3.5"><path d="M0 0h6L3 3.500z" fill="#333"/></svg>
<div class="a " style="left:624px;top:682px;width:29px;height:28px;background:#fcfcfc;border:1px solid #dedede;"></div>
<svg class="a" style="left:630.5px;top:688px;" width="16" height="16" viewBox="0 0 16 16"><path d="M8 2v12M2 8h12" stroke="#4da6f0" stroke-width="1.900"/><path d="M8 0l3.100 3.700H4.900zM8 16l3.100-3.700H4.900zM0 8l3.700-3.100v6.200zM16 8l-3.700-3.100v6.200z" fill="#4da6f0"/></svg>
<div class="a p" style="left:257px;top:751px;width:436px;height:222px;"></div>
<span class="t" style="left:274.30px;top:768px;font-size:15px;transform:scaleX(0.9040);color:#17172f;">Beteiligte Personen</span>
<svg class="a" style="left:665px;top:772.5px;" width="12" height="8" viewBox="0 0 12 8"><path d="M1.200 7L6 2l4.800 5" fill="none" stroke="#b9b9b9" stroke-width="2"/></svg>
<span class="t" style="left:276.00px;top:815px;font-size:12.5px;transform:scaleX(0.9522);color:#53566a;">Ansprechpartner</span>
<div class="a " style="left:401px;top:808px;width:273px;height:24px;background:#ffe3e0;border:1px solid #e4d8d7;border-radius:2px;"></div>
<svg class="a" style="left:633px;top:814px;" width="12" height="12" viewBox="0 0 14 14"><path d="M6.5 1.8H1.8v10.4h10.4V7.5" fill="none" stroke="#929292" stroke-width="1.5"/><path d="M8.2 1.2h4.6v4.6M12.6 1.4L6.6 7.4" fill="none" stroke="#929292" stroke-width="1.5"/></svg>
<svg class="a" style="left:654.5px;top:814px;" width="12" height="12" viewBox="0 0 16 16"><circle cx="10" cy="5.900" r="4.300" fill="none" stroke="#8c8c8c" stroke-width="1.7"/><path d="M6.900 9.100L2.400 13.600" stroke="#8c8c8c" stroke-width="2.2" stroke-linecap="round"/></svg>
<span class="t" style="left:276.00px;top:845px;font-size:12.5px;transform:scaleX(0.9387);color:#53566a;">Geschäftspartner</span>
<div class="a " style="left:401px;top:838px;width:273px;height:24px;background:#f4f4f4;border:1px solid #dadada;border-radius:2px;"></div>
<svg class="a" style="left:633px;top:844px;" width="12" height="12" viewBox="0 0 14 14"><path d="M6.5 1.8H1.8v10.4h10.4V7.5" fill="none" stroke="#929292" stroke-width="1.5"/><path d="M8.2 1.2h4.6v4.6M12.6 1.4L6.6 7.4" fill="none" stroke="#929292" stroke-width="1.5"/></svg>
<svg class="a" style="left:654.5px;top:844px;" width="12" height="12" viewBox="0 0 16 16"><circle cx="10" cy="5.900" r="4.300" fill="none" stroke="#8c8c8c" stroke-width="1.7"/><path d="M6.900 9.100L2.400 13.600" stroke="#8c8c8c" stroke-width="2.2" stroke-linecap="round"/></svg>
<span class="t" style="left:408.00px;top:845px;font-size:12.5px;transform:scaleX(0.8774);color:#1e1e3c;">ADAC MÜNCHEN ZENTRALE - INTERE...</span>
<span class="t" style="left:276.00px;top:875px;font-size:12.5px;color:#53566a;">Initiator</span>
<div class="a " style="left:401px;top:868px;width:273px;height:24px;background:#fff;border:1.500px solid #e5a823;border-radius:2px;"></div>
<svg class="a" style="left:633px;top:874px;" width="12" height="12" viewBox="0 0 14 14"><path d="M6.5 1.8H1.8v10.4h10.4V7.5" fill="none" stroke="#3347b5" stroke-width="1.5"/><path d="M8.2 1.2h4.6v4.6M12.6 1.4L6.6 7.4" fill="none" stroke="#3347b5" stroke-width="1.5"/></svg>
<svg class="a" style="left:654.5px;top:874px;" width="12" height="12" viewBox="0 0 16 16"><circle cx="10" cy="5.900" r="4.300" fill="none" stroke="#3347b5" stroke-width="1.7"/><path d="M6.900 9.100L2.400 13.600" stroke="#3347b5" stroke-width="2.2" stroke-linecap="round"/></svg>
<span class="t" style="left:408.00px;top:875px;font-size:12.5px;transform:scaleX(0.9724);color:#1e1e3c;">AML - Anne-Maria</span>
<span class="t" style="left:276.00px;top:905px;font-size:12.5px;transform:scaleX(0.9495);color:#53566a;">Delegiert an</span>
<div class="a " style="left:401px;top:898px;width:273px;height:24px;background:#fff;border:1px solid #dadada;border-radius:2px;"></div>
<svg class="a" style="left:633px;top:904px;" width="12" height="12" viewBox="0 0 14 14"><path d="M6.5 1.8H1.8v10.4h10.4V7.5" fill="none" stroke="#929292" stroke-width="1.5"/><path d="M8.2 1.2h4.6v4.6M12.6 1.4L6.6 7.4" fill="none" stroke="#929292" stroke-width="1.5"/></svg>
<svg class="a" style="left:654.5px;top:904px;" width="12" height="12" viewBox="0 0 16 16"><circle cx="10" cy="5.900" r="4.300" fill="none" stroke="#8c8c8c" stroke-width="1.7"/><path d="M6.900 9.100L2.400 13.600" stroke="#8c8c8c" stroke-width="2.2" stroke-linecap="round"/></svg>
<span class="t" style="left:408.00px;top:905px;font-size:12.5px;transform:scaleX(0.9724);color:#1e1e3c;">AML - Anne-Maria</span>
<span class="t" style="left:276.00px;top:935px;font-size:12.5px;transform:scaleX(0.9550);color:#53566a;">Delegiert an Gruppe</span>
<div class="a " style="left:401px;top:928px;width:273px;height:24px;background:#fff;border:1px solid #dadada;border-radius:2px;"></div>
<svg class="a" style="left:633px;top:934px;" width="12" height="12" viewBox="0 0 14 14"><path d="M6.5 1.8H1.8v10.4h10.4V7.5" fill="none" stroke="#929292" stroke-width="1.5"/><path d="M8.2 1.2h4.6v4.6M12.6 1.4L6.6 7.4" fill="none" stroke="#929292" stroke-width="1.5"/></svg>
<svg class="a" style="left:654.5px;top:934px;" width="12" height="12" viewBox="0 0 16 16"><circle cx="10" cy="5.900" r="4.300" fill="none" stroke="#8c8c8c" stroke-width="1.7"/><path d="M6.900 9.100L2.400 13.600" stroke="#8c8c8c" stroke-width="2.2" stroke-linecap="round"/></svg>
<div class="a " style="left:509px;top:876.5px;width:5.5px;height:9px;background:#f3efe9;"></div>
<div class="a " style="left:514px;top:878.5px;width:5.5px;height:7px;background:#cfd0d6;"></div>
<div class="a " style="left:519px;top:876.5px;width:5.5px;height:9px;background:#b9bac3;"></div>
<div class="a " style="left:524px;top:878.5px;width:5.5px;height:7px;background:#d9d2d6;"></div>
<div class="a " style="left:529px;top:876.5px;width:5.5px;height:9px;background:#c2bfc9;"></div>
<div class="a " style="left:534px;top:878.5px;width:5.5px;height:7px;background:#b4b6bf;"></div>
<div class="a " style="left:513px;top:882.5px;width:20px;height:5px;background:#a9abb6;opacity:.55;"></div>
<div class="a " style="left:510px;top:906.5px;width:5.5px;height:9px;background:#f3efe9;"></div>
<div class="a " style="left:515px;top:908.5px;width:5.5px;height:7px;background:#cfd0d6;"></div>
<div class="a " style="left:520px;top:906.5px;width:5.5px;height:9px;background:#b9bac3;"></div>
<div class="a " style="left:525px;top:908.5px;width:5.5px;height:7px;background:#d9d2d6;"></div>
<div class="a " style="left:530px;top:906.5px;width:5.5px;height:9px;background:#c2bfc9;"></div>
<div class="a " style="left:535px;top:908.5px;width:5.5px;height:7px;background:#b4b6bf;"></div>
<div class="a " style="left:514px;top:912.5px;width:20px;height:5px;background:#a9abb6;opacity:.55;"></div>
<div class="a " style="left:561px;top:919px;width:25px;height:9px;background:#fbfbfb;"></div>
<div class="a p" style="left:715px;top:203px;width:646px;height:770px;"></div>
<div class="a " style="left:715px;top:240px;width:646px;height:1px;background:#e3e3e3;"></div>
<div class="a " style="left:715px;top:236px;width:115px;height:4px;background:#2f4799;"></div>
<span class="t" style="left:733.50px;top:216px;font-size:12px;transform:scaleX(0.9164);color:#1e1e3c;">KOMMENTARE</span>
<span class="t" style="left:850.00px;top:216px;font-size:12px;transform:scaleX(0.8981);color:#6d6d78;">ANLIEGEN</span>
<span class="t" style="left:943.50px;top:216px;font-size:12px;transform:scaleX(0.9198);color:#6d6d78;">ÄNDERUNGEN</span>
<div class="a " style="left:805px;top:382px;width:466px;height:132px;background:#efefef;border-radius:5px;"></div>
<svg class="a" style="left:1015px;top:405px;" width="46" height="44" viewBox="0 0 46 44"><rect x="1.500" y="2" width="43" height="35" rx="1.500" fill="#fff" stroke="#8d97a8" stroke-width="1.200"/><rect x="1.500" y="2" width="43" height="5" rx="1.500" fill="#c3cbd9" stroke="#8d97a8" stroke-width="1"/><path d="M8 15h3M8 20h3M8 25h3M8 30h3" stroke="#8d97a8" stroke-width="1.200"/><path d="M14 15h24M14 20h24M14 25h20M14 30h12" stroke="#a7b0c0" stroke-width="1.200"/><path d="M36 24.500l2.400 2 3-.9 1 3 3 1-.9 3 2 2.400-2 2.400.9 3-3 1-1 3-3-.9-2.400 2-2.400-2-3 .9-1-3-3-1 .9-3-2-2.400 2-2.400-.9-3 3-1 1-3 3 .9z" fill="#fbe08a" stroke="#e0b64a" stroke-width=".9" transform="translate(-5.200,-6.800) scale(1.12)"/></svg>
<span class="t" style="left:1007.80px;top:461px;font-size:13px;transform:scaleX(0.9157);color:#2a2a33;font-weight:bold;">Neuanlage</span>
<span class="t" style="left:819.00px;top:482px;font-size:11.8px;transform:scaleX(0.9126);color:#3a3a44;">Wenn Sie Ihren Datensatz gespeichert haben, können Sie hier einen Kommentar schreiben.</span>
<div class="a" style="left:1310px;top:896px;width:48px;height:77px;overflow:hidden;"><div class="a" style="left:26px;top:20px;width:40px;height:40px;border-radius:20px;background:#8997c8;box-shadow:0 3px 9px rgba(0,0,0,.28);"></div><svg class="a" style="left:35.500px;top:32.500px" width="9" height="15"><path d="M7.600 1.200L1.800 7.500l5.800 6.300" fill="none" stroke="#7283c3" stroke-width="2.300"/></svg></div>
<div class="a p" style="left:1383px;top:203px;width:436px;height:118px;"></div>
<div class="a " style="left:1383px;top:240px;width:436px;height:1px;background:#e3e3e3;"></div>
<div class="a " style="left:1383px;top:236px;width:76px;height:4px;background:#2f4799;"></div>
<span class="t" style="left:1401.30px;top:216px;font-size:12px;transform:scaleX(0.8539);color:#1e1e3c;">STATUS</span>
<div class="a " style="left:1410px;top:266px;width:26px;height:26px;background:#fff;border:1px solid #ececec;border-radius:13px;box-shadow:0 0 2px rgba(0,0,0,.10);"></div>
<div class="a " style="left:1537px;top:266px;width:26px;height:26px;background:#fff;border:1px solid #ececec;border-radius:13px;box-shadow:0 0 2px rgba(0,0,0,.10);"></div>
<div class="a " style="left:1706px;top:266px;width:26px;height:26px;background:#fff;border:1px solid #ececec;border-radius:13px;box-shadow:0 0 2px rgba(0,0,0,.10);"></div>
<svg class="a" style="left:1416px;top:272px;" width="14" height="14" viewBox="0 0 14 14"><circle cx="7" cy="7" r="5.800" fill="#fff" stroke="#858585" stroke-width="1.250"/></svg>
<svg class="a" style="left:1542.5px;top:271.5px;" width="15" height="15" viewBox="0 0 15 15"><circle cx="7.500" cy="7.500" r="6" fill="none" stroke="#f3b61f" stroke-width="1.300" stroke-dasharray="1.600 1.300"/><path d="M7.500 1.500a6 6 0 0 1 0 12" fill="none" stroke="#f3b61f" stroke-width="1.400"/><path d="M4.800 7.600l2 2 3.400-3.800" fill="none" stroke="#f3b61f" stroke-width="1.300"/></svg>
<svg class="a" style="left:1712px;top:272px;" width="14" height="14" viewBox="0 0 14 14"><circle cx="7" cy="7" r="6.600" fill="#3daa46"/><path d="M3.800 7.200l2.200 2.200 4.200-4.400" fill="none" stroke="#fff" stroke-width="1.600"/></svg>
<span class="t" style="left:1444.50px;top:271px;font-size:14px;transform:scaleX(0.9603);color:#cbcbcf;font-weight:bold;">Offen</span>
<div class="a " style="left:1488px;top:279px;width:41px;height:1px;background:#dcdcdc;"></div>
<span class="t" style="left:1571.50px;top:271px;font-size:14px;transform:scaleX(0.9469);color:#cbcbcf;font-weight:bold;">In Bearbeitung</span>
<div class="a " style="left:1673px;top:279px;width:25px;height:1px;background:#dcdcdc;"></div>
<span class="t" style="left:1740.30px;top:271px;font-size:14px;transform:scaleX(0.9342);color:#cbcbcf;font-weight:bold;">Beendet</span>
<div class="a" style="left:1770px;top:246px;width:46px;height:74px;overflow:hidden;"><div class="a" style="left:24px;top:18px;width:40px;height:40px;border-radius:20px;background:#8997c8;box-shadow:0 3px 9px rgba(0,0,0,.28);"></div><svg class="a" style="left:32px;top:27px" width="16" height="22"><path d="M16 2.500L4 16" fill="none" stroke="#7283c3" stroke-width="2.200"/><path d="M.8 12.200v8h8z" fill="#7283c3"/><path d="M12 .2h6v6" fill="none" stroke="#7283c3" stroke-width="2"/></svg></div>
<div class="a p" style="left:1383px;top:339px;width:436px;height:270px;"></div>
<div class="a " style="left:1383px;top:376px;width:436px;height:1px;background:#e3e3e3;"></div>
<div class="a " style="left:1383px;top:372px;width:79px;height:4px;background:#2f4799;"></div>
<span class="t" style="left:1401.30px;top:352px;font-size:12px;transform:scaleX(0.8570);color:#1e1e3c;">DETAILS</span>
<span class="t" style="left:1398.00px;top:395px;font-size:12.5px;transform:scaleX(0.9467);color:#53566a;">Fälligkeitsdatum</span>
<div class="a " style="left:1523px;top:388px;width:84px;height:24px;background:#fff;border:1px solid #dadada;border-radius:2px;"></div>
<svg class="a" style="left:1613px;top:393px;" width="11" height="14" viewBox="0 0 11 14"><rect x=".5" y="2.500" width="10" height="10" fill="#fdfdfd" stroke="#b9b9b9"/><rect x=".5" y="1.500" width="10" height="2.600" fill="#c4c4c4" stroke="#b0b0b0"/><path d="M3.500 4.500v8M6 4.500v8M8.500 4.500v8M.5 7.200h10M.5 9.900h10" stroke="#c6c6c6" stroke-width=".8"/><path d="M2.500 .500v2M8.500 .500v2" stroke="#9a9a9a" stroke-width="1.100"/></svg>
<div class="a " style="left:1628px;top:388px;width:50px;height:24px;background:#fff;border:1px solid #dadada;border-radius:2px;"></div>
<span class="t" style="left:1530.00px;top:395px;font-size:12.5px;transform:scaleX(0.9111);color:#1e1e3c;">23.08.2022</span>
<span class="t" style="left:1635.50px;top:395px;font-size:12.5px;transform:scaleX(0.9111);color:#1e1e3c;">15:00</span>
<span class="t" style="left:1398.00px;top:425px;font-size:12.5px;transform:scaleX(0.9496);color:#53566a;">Erinnerungsdatum</span>
<div class="a " style="left:1523px;top:418px;width:84px;height:24px;background:#fff;border:1px solid #dadada;border-radius:2px;"></div>
<svg class="a" style="left:1613px;top:423px;" width="11" height="14" viewBox="0 0 11 14"><rect x=".5" y="2.500" width="10" height="10" fill="#fdfdfd" stroke="#b9b9b9"/><rect x=".5" y="1.500" width="10" height="2.600" fill="#c4c4c4" stroke="#b0b0b0"/><path d="M3.500 4.500v8M6 4.500v8M8.500 4.500v8M.5 7.200h10M.5 9.900h10" stroke="#c6c6c6" stroke-width=".8"/><path d="M2.500 .500v2M8.500 .500v2" stroke="#9a9a9a" stroke-width="1.100"/></svg>
<div class="a " style="left:1628px;top:418px;width:50px;height:24px;background:#fff;border:1px solid #dadada;border-radius:2px;"></div>
<span class="t" style="left:1530.00px;top:425px;font-size:12.5px;transform:scaleX(0.9111);color:#1e1e3c;">16.08.2022</span>
<span class="t" style="left:1635.50px;top:425px;font-size:12.5px;transform:scaleX(0.9111);color:#1e1e3c;">15:00</span>
<span class="t" style="left:1398.00px;top:471px;font-size:12.5px;transform:scaleX(0.9155);color:#53566a;">Eingang</span>
<div class="a " style="left:1523px;top:464px;width:84px;height:24px;background:#fff;border:1px solid #dadada;border-radius:2px;"></div>
<svg class="a" style="left:1613px;top:469px;" width="11" height="14" viewBox="0 0 11 14"><rect x=".5" y="2.500" width="10" height="10" fill="#fdfdfd" stroke="#b9b9b9"/><rect x=".5" y="1.500" width="10" height="2.600" fill="#c4c4c4" stroke="#b0b0b0"/><path d="M3.500 4.500v8M6 4.500v8M8.500 4.500v8M.5 7.200h10M.5 9.900h10" stroke="#c6c6c6" stroke-width=".8"/><path d="M2.500 .500v2M8.500 .500v2" stroke="#9a9a9a" stroke-width="1.100"/></svg>
<div class="a " style="left:1628px;top:464px;width:50px;height:24px;background:#fff;border:1px solid #dadada;border-radius:2px;"></div>
<span class="t" style="left:1530.00px;top:471px;font-size:12.5px;transform:scaleX(0.9111);color:#1e1e3c;">09.08.2022</span>
<span class="t" style="left:1635.50px;top:471px;font-size:12.5px;transform:scaleX(0.9111);color:#1e1e3c;">10:51</span>
<span class="t" style="left:1398.00px;top:501px;font-size:12.5px;transform:scaleX(0.9369);color:#53566a;">Eingangsart</span>
<div class="a " style="left:1523px;top:494px;width:281px;height:24px;background:#fff;border:1px solid #dadada;border-radius:2px;"></div>
<svg class="a" style="left:1763.5px;top:503.7px;" width="11" height="5.2" viewBox="0 0 11 5.2"><path d="M0 0h11L5.5 5.2z" fill="#8a8a8a"/></svg>
<svg class="a" style="left:1785px;top:500px;" width="12" height="12" viewBox="0 0 16 16"><circle cx="10" cy="5.900" r="4.300" fill="none" stroke="#8c8c8c" stroke-width="1.7"/><path d="M6.900 9.100L2.400 13.600" stroke="#8c8c8c" stroke-width="2.2" stroke-linecap="round"/></svg>
<span class="t" style="left:1398.00px;top:547px;font-size:12.5px;transform:scaleX(0.9390);color:#53566a;">Klassifikation</span>
<div class="a " style="left:1523px;top:540px;width:281px;height:24px;background:#fff;border:1px solid #dadada;border-radius:2px;"></div>
<svg class="a" style="left:1763.5px;top:549.7px;" width="11" height="5.2" viewBox="0 0 11 5.2"><path d="M0 0h11L5.5 5.2z" fill="#8a8a8a"/></svg>
<svg class="a" style="left:1785px;top:546px;" width="12" height="12" viewBox="0 0 16 16"><circle cx="10" cy="5.900" r="4.300" fill="none" stroke="#8c8c8c" stroke-width="1.7"/><path d="M6.900 9.100L2.400 13.600" stroke="#8c8c8c" stroke-width="2.2" stroke-linecap="round"/></svg>
<span class="t" style="left:1398.00px;top:577px;font-size:12.5px;transform:scaleX(0.9563);color:#53566a;">Unterklassifikation</span>
<div class="a " style="left:1523px;top:570px;width:281px;height:24px;background:#fff;border:1px solid #dadada;border-radius:2px;"></div>
<svg class="a" style="left:1763.5px;top:579.7px;" width="11" height="5.2" viewBox="0 0 11 5.2"><path d="M0 0h11L5.5 5.2z" fill="#8a8a8a"/></svg>
<svg class="a" style="left:1785px;top:576px;" width="12" height="12" viewBox="0 0 16 16"><circle cx="10" cy="5.900" r="4.300" fill="none" stroke="#8c8c8c" stroke-width="1.7"/><path d="M6.900 9.100L2.400 13.600" stroke="#8c8c8c" stroke-width="2.2" stroke-linecap="round"/></svg>
<div class="a p" style="left:1383px;top:627px;width:436px;height:346px;"></div>
<div class="a " style="left:1383px;top:663px;width:436px;height:1px;background:#e3e3e3;"></div>
<div class="a " style="left:1383px;top:659px;width:152px;height:4px;background:#2f4799;"></div>
<span class="t" style="left:1401.30px;top:640px;font-size:12px;transform:scaleX(0.8762);color:#1e1e3c;">VORGANGSERGEBNIS</span>
<span class="t" style="left:1398.00px;top:682px;font-size:12.5px;transform:scaleX(0.9432);color:#53566a;">Abschlussdatum</span>
<div class="a " style="left:1523px;top:675px;width:84px;height:24px;background:#fff;border:1px solid #dadada;border-radius:2px;"></div>
<svg class="a" style="left:1613px;top:680px;" width="11" height="14" viewBox="0 0 11 14"><rect x=".5" y="2.500" width="10" height="10" fill="#fdfdfd" stroke="#b9b9b9"/><rect x=".5" y="1.500" width="10" height="2.600" fill="#c4c4c4" stroke="#b0b0b0"/><path d="M3.500 4.500v8M6 4.500v8M8.500 4.500v8M.5 7.200h10M.5 9.900h10" stroke="#c6c6c6" stroke-width=".8"/><path d="M2.500 .500v2M8.500 .500v2" stroke="#9a9a9a" stroke-width="1.100"/></svg>
<div class="a " style="left:1628px;top:675px;width:50px;height:24px;background:#fff;border:1px solid #dadada;border-radius:2px;"></div>
<span class="t" style="left:1398.00px;top:712px;font-size:12.5px;transform:scaleX(0.9387);color:#53566a;">Durchlaufzeit (Tage)</span>
<div class="a " style="left:1523px;top:705px;width:281px;height:24px;background:#fff;border:1px solid #dadada;border-radius:2px;"></div>
<span class="t" style="left:1397.70px;top:757px;font-size:12.5px;transform:scaleX(0.9081);color:#53566a;">Ergebnis</span>
<div class="a " style="left:1398px;top:774px;width:406px;height:184px;background:#fff;border:1px solid #dadada;"></div>
<div class="a " style="left:1398px;top:774px;width:406px;height:27px;background:#fcfcfc;border:1px solid #dadada;"></div>
<div class="a " style="left:1779px;top:781px;width:14px;height:13px;background:#e6e6e6;border:1px solid #b3b3b3;"></div>
<svg class="a" style="left:1783px;top:786px;" width="6" height="3.5" viewBox="0 0 6 3.5"><path d="M0 0h6L3 3.500z" fill="#333"/></svg>
<div class="a " style="left:1750px;top:922px;width:29px;height:28px;background:#fcfcfc;border:1px solid #dedede;"></div>
<svg class="a" style="left:1756.5px;top:928px;" width="16" height="16" viewBox="0 0 16 16"><path d="M8 2v12M2 8h12" stroke="#4da6f0" stroke-width="1.900"/><path d="M8 0l3.100 3.700H4.900zM8 16l3.100-3.700H4.900zM0 8l3.700-3.100v6.200zM16 8l-3.700-3.100v6.200z" fill="#4da6f0"/></svg>
<div class="a " style="left:1828px;top:0px;width:1px;height:983px;background:#1c1c1c;"></div>
</body></html>
